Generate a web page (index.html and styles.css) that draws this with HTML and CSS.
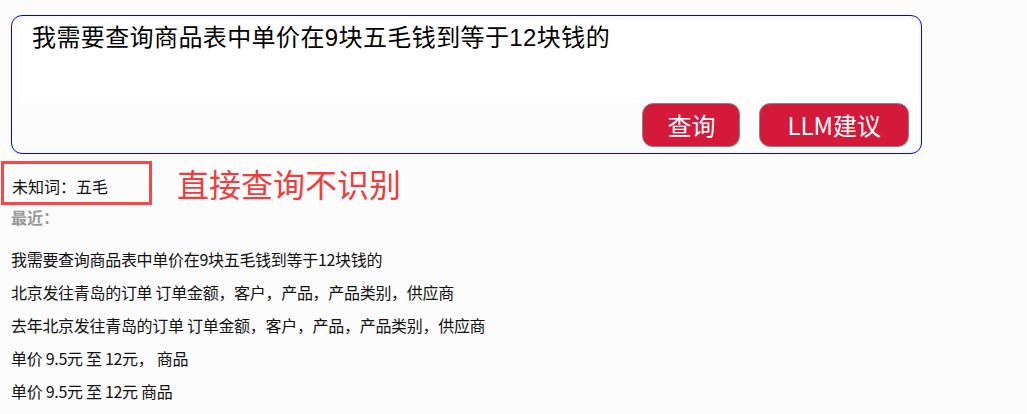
FILE: index.html
```html
<!DOCTYPE html>
<html lang="zh">
<head>
    <meta charset="UTF-8">
    <meta name="viewport" content="width=device-width, initial-scale=1.0">
    <title>查询</title>
    <link rel="stylesheet" href="styles.css">
</head>
<body>
    <div class="search-box">
        <textarea class="query-input">我需要查询商品表中单价在9块五毛钱到等于12块钱的</textarea>
        <div class="actions">
            <button type="button" class="btn">查询</button>
            <button type="button" class="btn">LLM建议</button>
        </div>
    </div>

    <div class="note-row">
        <div class="unknown">未知词：五毛</div>
        <div class="note">直接查询不识别</div>
    </div>

    <div class="recent-title">最近：</div>
    <ul class="recent-list">
        <li>我需要查询商品表中单价在9块五毛钱到等于12块钱的</li>
        <li>北京发往青岛的订单 订单金额，客户，产品，产品类别，供应商</li>
        <li>去年北京发往青岛的订单 订单金额，客户，产品，产品类别，供应商</li>
        <li>单价 9.5元 至 12元， 商品</li>
        <li>单价 9.5元 至 12元 商品</li>
    </ul>
</body>
</html>
```

FILE: styles.css
```css
body {
    font-family: "Noto Sans CJK SC", "Noto Sans", sans-serif;
    background-color: #fcfcfc;
    color: #111;
    margin: 0;
    font-size: 16px;
}
.search-box {
    margin: 15px 0 0 11px;
    width: 911px;
    height: 139px;
    box-sizing: border-box;
    border: 1px solid #0000ff;
    border-radius: 11px;
    padding: 4px 4px 0 5px;
    display: flex;
    flex-direction: column;
}
.query-input {
    height: 83px;
    box-sizing: border-box;
    border: none;
    outline: none;
    resize: none;
    background-color: #fff;
    padding: 3px 15px;
    font-family: "Liberation Sans", "Noto Sans CJK SC", sans-serif;
    font-size: 24px;
    letter-spacing: 0.4px;
    line-height: 30px;
    color: #000;
}
.actions {
    display: flex;
    justify-content: flex-end;
    gap: 19px;
    padding-right: 8px;
}
.btn {
    margin: 0;
    background-color: #d4193b;
    color: white;
    border: 1px solid #888;
    border-radius: 11px;
    height: 44px;
    padding: 0 24px;
    font-family: "Noto Sans CJK SC", sans-serif;
    font-size: 24px;
    line-height: 42px;
}
.btn + .btn {
    padding: 0 27px;
}
.note-row {
    display: flex;
    align-items: center;
    margin-top: 7px;
}
.unknown {
    margin-left: 1px;
    width: 151px;
    height: 44px;
    box-sizing: border-box;
    border: 3px solid #ff4444;
    padding-left: 8px;
    line-height: 44px;
    font-size: 16px;
}
.note {
    margin-left: 25px;
    font-size: 32px;
    color: #f03c3c;
    line-height: 40px;
}
.recent-title {
    margin: 2px 0 0 11px;
    color: #999;
    font-weight: bold;
    font-size: 16px;
    line-height: 20px;
}
.recent-list {
    list-style: none;
    margin: 16px 0 0 11px;
    padding: 0;
}
.recent-list li {
    line-height: 33px;
    font-size: 16px;
    letter-spacing: -0.3px;
}
```
